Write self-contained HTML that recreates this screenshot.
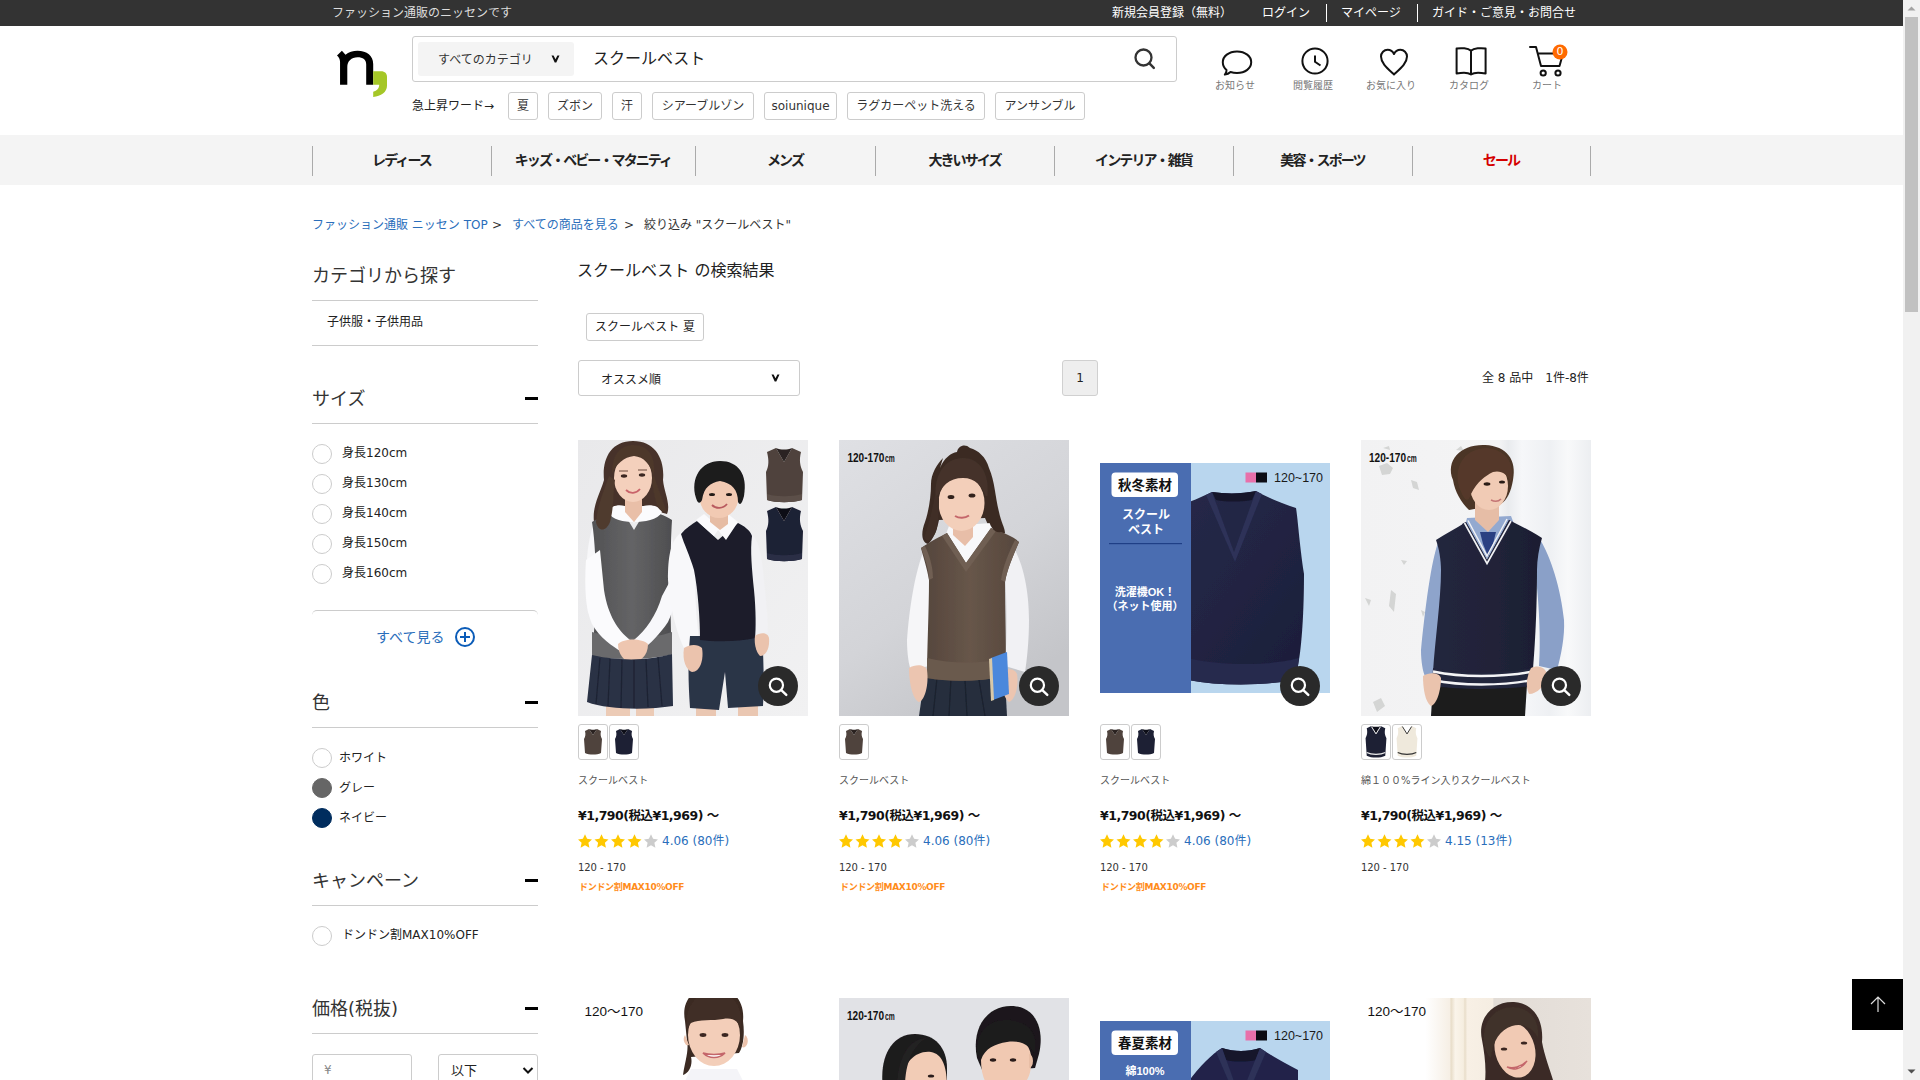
<!DOCTYPE html>
<html lang="ja">
<head>
<meta charset="utf-8">
<title>スクールベスト の検索結果 | ニッセン</title>
<style>
*{box-sizing:border-box;margin:0;padding:0}
html,body{width:1920px;height:1080px;overflow:hidden;background:#fff}
body{font-family:"DejaVu Sans","Liberation Sans","Noto Sans CJK JP",sans-serif;color:#333;position:relative;font-size:12px}
a{color:inherit;text-decoration:none}
.abs{position:absolute}
.t{position:absolute;white-space:nowrap;line-height:1}
#page{position:absolute;left:0;top:0;width:1903px;height:1080px;overflow:hidden;background:#fff}
/* top bar */
#topbar{position:absolute;left:0;top:0;width:1903px;height:26px;background:#333}
#topbar .t{font-size:12px;color:#fff;top:7px}
#topbar .sep{position:absolute;top:4px;width:1px;height:18px;background:#fff}
/* header */
#search{position:absolute;left:412px;top:36px;width:765px;height:46px;border:1px solid #ccc;border-radius:3px;background:#fff}
#catsel{position:absolute;left:418px;top:42px;width:156px;height:34px;background:#f4f4f4;border-radius:3px}
.tag{position:absolute;top:92px;height:28px;border:1px solid #ccc;border-radius:3px;font-size:12px;line-height:27px;text-align:center;white-space:nowrap;color:#333;background:#fff}
.hicon{position:absolute;top:44px;width:60px;height:50px}
.hlabel{position:absolute;top:81px;width:78px;text-align:center;font-size:10px;line-height:1;color:#777;white-space:nowrap}
/* nav */
#nav{position:absolute;left:0;top:135px;width:1903px;height:50px;background:#f4f4f4}
#nav .sep{position:absolute;top:11px;width:1px;height:30px;background:#aaa}
#nav .t{font-size:14px;font-weight:bold;color:#222;top:18px;text-align:center;letter-spacing:-1.9px}
/* breadcrumb */
.bc{font-size:12px;top:218.500px;color:#2a6ebb}
/* sidebar */
.sh{font-size:18px;color:#333}
.hr{position:absolute;left:312px;width:226px;height:1px;background:#ccc}
.minus{position:absolute;left:525px;width:13px;height:3px;background:#000}
.radio{position:absolute;left:312px;width:20px;height:20px;border-radius:50%;border:1px solid #ccc;background:#fff}
.sl{font-size:12px;color:#222}
/* main */
.card{position:absolute;width:230px}
.pimg{position:absolute;left:0;top:0;width:230px;height:276px;overflow:hidden}
.zoom{position:absolute;left:180px;top:226px;width:40px;height:40px;border-radius:50%;background:#2a2a2a}
.sw{position:absolute;top:284px;width:30px;height:36px;border:1px solid #ccc;border-radius:3px;background:#fff;overflow:hidden}
.pname{font-size:10px;color:#555;top:336.300px;left:0}
.price{font-size:12.5px;font-weight:bold;color:#111;top:369.500px;left:0;letter-spacing:-0.5px}
.stars{position:absolute;left:0;top:833px}
.rate{font-size:12px;color:#2a6ebb;top:395px;left:84px}
.size{font-size:10px;color:#333;top:422.500px;left:0;letter-spacing:-0.05px}
.camp{font-size:9px;font-weight:bold;color:#ff8c1a;top:443px;left:1px;letter-spacing:-0.3px}
</style>
</head>
<body>
<div id="page">

<!-- ===== top bar ===== -->
<div id="topbar">
  <span class="t" style="left:332px;color:#ddd">ファッション通販のニッセンです</span>
  <a class="t" style="left:1112px">新規会員登録（無料）</a>
  <a class="t" style="left:1262px">ログイン</a>
  <span class="sep" style="left:1326px"></span>
  <a class="t" style="left:1341px">マイページ</a>
  <span class="sep" style="left:1417px"></span>
  <a class="t" style="left:1432px">ガイド・ご意見・お問合せ</a>
</div>

<!-- ===== header ===== -->
<svg class="abs" style="left:325px;top:40px" width="80" height="65" viewBox="0 0 80 65">
  <path d="M12 15.400 L16.900 10.800 L20.500 14.800 C23.500 12 28 10.800 32.500 10.800 C42 10.800 48.200 16 48.200 24 L48.200 44.850 L41.200 44.850 L41.200 24.500 C41.200 19.500 38 17.200 32.500 17.200 C26.500 17.200 22.300 21 22.300 27 L22.300 44.850 L15.050 44.850 L15.050 22 C15.050 19 13.800 17 12 15.400 Z" fill="#000"/>
  <path d="M48.200 31.200 L56 31.200 C60 31.200 62 33.500 62 37 L62 45.750 C62 52 56 56.500 48.200 56.900 L48.200 51.800 C52 51 54.200 48.500 54.200 44.850 L48.200 44.850 Z" fill="#a5c727"/>
</svg>
<div id="search"></div>
<div id="catsel"></div>
<span class="t" style="left:438px;top:53.5px;font-size:12px;color:#333">すべてのカテゴリ</span>
<svg class="abs" style="left:551px;top:55px" width="9" height="8" viewBox="0 0 9 8"><path d="M0.5 0.5 L2.6 0.5 L4.5 4.2 L6.4 0.5 L8.5 0.5 L5.3 7.5 L3.7 7.5 Z" fill="#111"/></svg>
<span class="t" style="left:593px;top:51px;font-size:16px;color:#222">スクールベスト</span>
<svg class="abs" style="left:1131.500px;top:46.400px" width="26" height="26" viewBox="0 0 26 26"><circle cx="11.500" cy="11.500" r="8" fill="none" stroke="#333" stroke-width="2.300"/><path d="M17.400 17.400 L21.800 21.800" stroke="#333" stroke-width="2.500" stroke-linecap="round"/></svg>

<span class="t" style="left:412px;top:100px;font-size:12px;color:#222">急上昇ワード→</span>
<a class="tag" style="left:508px;width:30px">夏</a>
<a class="tag" style="left:548px;width:54px">ズボン</a>
<a class="tag" style="left:612px;width:30px">汗</a>
<a class="tag" style="left:652px;width:102px">シアーブルゾン</a>
<a class="tag" style="left:764px;width:73px">soiunique</a>
<a class="tag" style="left:847px;width:138px">ラグカーペット洗える</a>
<a class="tag" style="left:995px;width:90px">アンサンブル</a>

<!-- header icons -->
<svg class="abs" style="left:1219px;top:46px" width="36" height="32" viewBox="0 0 36 32"><path d="M18 5.500 C26.300 5.500 32.200 10.300 32.200 16.300 C32.200 22.300 26.300 27 18 27 C15.600 27 13.400 26.600 11.500 26 C10 27.400 8 28.300 5.800 28.600 C7 27.300 7.600 25.700 7.500 24 C5.200 22 3.800 19.300 3.800 16.300 C3.800 10.300 9.700 5.500 18 5.500 Z" fill="none" stroke="#111" stroke-width="2" stroke-linejoin="round"/></svg>
<svg class="abs" style="left:1299px;top:45px" width="32" height="32" viewBox="0 0 32 32"><circle cx="16" cy="16" r="12.6" fill="none" stroke="#111" stroke-width="2"/><path d="M16 10.500 L16 16.800 L21.500 20.500" fill="none" stroke="#111" stroke-width="2"/></svg>
<svg class="abs" style="left:1377px;top:46px" width="34" height="32" viewBox="0 0 34 32"><path d="M17 28.5 C10 22 4 17 4 10.6 C4 6.6 7 3.8 10.6 3.8 C13.4 3.8 15.8 5.4 17 8 C18.2 5.4 20.6 3.8 23.4 3.8 C27 3.8 30 6.6 30 10.6 C30 17 24 22 17 28.5 Z" fill="none" stroke="#111" stroke-width="2" stroke-linejoin="round"/></svg>
<svg class="abs" style="left:1453px;top:45px" width="36" height="32" viewBox="0 0 36 32"><path d="M18 5.800 C15 3.200 8 2.600 3.600 3.600 L3.600 28.600 C8 27.600 15 27.400 18 29.400 C21 27.400 28 27.600 32.600 28.600 L32.600 3.600 C28 2.600 21 3.200 18 5.800 Z M18 5.800 V29.400" fill="none" stroke="#111" stroke-width="2" stroke-linejoin="round"/></svg>
<svg class="abs" style="left:1527px;top:43px" width="42" height="36" viewBox="0 0 42 36"><path d="M3 4 L9 4 L14 23 L32.500 23 L36 10.500 L11 10.500" fill="none" stroke="#111" stroke-width="2" stroke-linejoin="round" stroke-linecap="round"/><circle cx="16.200" cy="30" r="2.600" fill="none" stroke="#111" stroke-width="2"/><circle cx="31" cy="30" r="2.600" fill="none" stroke="#111" stroke-width="2"/><circle cx="33" cy="9" r="7.5" fill="#ff6a00"/></svg>
<span class="t" style="left:1556px;top:46px;font-size:11px;color:#fff;width:8px;text-align:center">0</span>
<span class="hlabel" style="left:1196px">お知らせ</span>
<span class="hlabel" style="left:1274px">閲覧履歴</span>
<span class="hlabel" style="left:1352px">お気に入り</span>
<span class="hlabel" style="left:1430px">カタログ</span>
<span class="hlabel" style="left:1508px">カート</span>

<!-- ===== nav ===== -->
<div id="nav">
  <span class="sep" style="left:312px"></span><span class="sep" style="left:491px"></span><span class="sep" style="left:695px"></span><span class="sep" style="left:875px"></span><span class="sep" style="left:1054px"></span><span class="sep" style="left:1233px"></span><span class="sep" style="left:1412px"></span><span class="sep" style="left:1590px"></span>
  <a class="t" style="left:312px;width:179px">レディース</a>
  <a class="t" style="left:491px;width:204px">キッズ・ベビー・マタニティ</a>
  <a class="t" style="left:695px;width:180px">メンズ</a>
  <a class="t" style="left:875px;width:179px">大きいサイズ</a>
  <a class="t" style="left:1054px;width:179px">インテリア・雑貨</a>
  <a class="t" style="left:1233px;width:179px">美容・スポーツ</a>
  <a class="t" style="left:1412px;width:178px;color:#d40000">セール</a>
</div>

<!-- ===== breadcrumb ===== -->
<a class="t bc" style="left:312px">ファッション通販 ニッセン TOP</a>
<span class="t bc" style="left:492px;color:#333">&gt;</span>
<a class="t bc" style="left:512px">すべての商品を見る</a>
<span class="t bc" style="left:624px;color:#333">&gt;</span>
<span class="t bc" style="left:644px;color:#333">絞り込み "スクールベスト"</span>

<!-- ===== sidebar ===== -->
<span class="t sh" style="left:312px;top:267px">カテゴリから探す</span>
<div class="hr" style="top:300px"></div>
<span class="t sl" style="left:327px;top:316px">子供服・子供用品</span>
<div class="hr" style="top:345px"></div>

<span class="t sh" style="left:312px;top:390px">サイズ</span>
<div class="minus" style="top:397px"></div>
<div class="hr" style="top:423px"></div>
<div class="radio" style="top:444px"></div><span class="t sl" style="left:342px;top:447px">身長120cm</span>
<div class="radio" style="top:474px"></div><span class="t sl" style="left:342px;top:477px">身長130cm</span>
<div class="radio" style="top:504px"></div><span class="t sl" style="left:342px;top:507px">身長140cm</span>
<div class="radio" style="top:534px"></div><span class="t sl" style="left:342px;top:537px">身長150cm</span>
<div class="radio" style="top:564px"></div><span class="t sl" style="left:342px;top:567px">身長160cm</span>
<div class="abs" style="left:312px;top:610px;width:226px;height:10px;border-top:1px solid #ccc;border-radius:5px 5px 0 0"></div>
<a class="t" style="left:376px;top:630px;font-size:14px;color:#2a6ebb">すべて見る</a>
<svg class="abs" style="left:454px;top:626px" width="22" height="22" viewBox="0 0 22 22"><circle cx="11" cy="11" r="9" fill="none" stroke="#0b5cb8" stroke-width="2"/><path d="M6 11 H16 M11 6 V16" stroke="#0b5cb8" stroke-width="2"/></svg>

<span class="t sh" style="left:312px;top:694px">色</span>
<div class="minus" style="top:701px"></div>
<div class="hr" style="top:727px"></div>
<div class="radio" style="top:748px"></div><span class="t sl" style="left:339px;top:752px">ホワイト</span>
<div class="radio" style="top:778px;background:#666;border-color:#666"></div><span class="t sl" style="left:339px;top:782px">グレー</span>
<div class="radio" style="top:808px;background:#002d5e;border-color:#002d5e"></div><span class="t sl" style="left:339px;top:812px">ネイビー</span>

<span class="t sh" style="left:312px;top:872px">キャンペーン</span>
<div class="minus" style="top:879px"></div>
<div class="hr" style="top:905px"></div>
<div class="radio" style="top:926px"></div><span class="t sl" style="left:342px;top:929px">ドンドン割MAX10%OFF</span>

<span class="t sh" style="left:312px;top:1000px">価格(税抜)</span>
<div class="minus" style="top:1007px"></div>
<div class="hr" style="top:1033px"></div>
<div class="abs" style="left:312px;top:1054px;width:100px;height:40px;border:1px solid #ccc;border-radius:3px"></div>
<span class="t" style="left:324px;top:1064px;font-size:12px;color:#888">¥</span>
<div class="abs" style="left:438px;top:1054px;width:100px;height:40px;border:1px solid #ccc;border-radius:3px"></div>
<span class="t" style="left:451px;top:1064px;font-size:13px;color:#222">以下</span>
<svg class="abs" style="left:522px;top:1066px" width="12" height="10" viewBox="0 0 12 10"><path d="M1.5 2 L6 6.5 L10.5 2" fill="none" stroke="#111" stroke-width="2"/></svg>

<!-- ===== main ===== -->
<span class="t" style="left:577px;top:263px;font-size:16px;color:#222">スクールベスト の検索結果</span>
<a class="abs" style="left:586px;top:313px;width:118px;height:28px;border:1px solid #ccc;border-radius:3px;font-size:12px;line-height:27px;text-align:center;color:#222;white-space:nowrap">スクールベスト 夏</a>
<div class="abs" style="left:578px;top:360px;width:222px;height:36px;border:1px solid #ccc;border-radius:3px"></div>
<span class="t" style="left:601px;top:373.500px;font-size:12px;color:#222">オススメ順</span>
<svg class="abs" style="left:771px;top:374px" width="9" height="8" viewBox="0 0 9 8"><path d="M0.5 0.5 L2.6 0.5 L4.5 4.2 L6.4 0.5 L8.5 0.5 L5.3 7.5 L3.7 7.5 Z" fill="#111"/></svg>
<div class="abs" style="left:1062px;top:360px;width:36px;height:36px;border:1px solid #d0d0d0;border-radius:3px;background:#eee;font-size:12px;line-height:34px;text-align:center;color:#222">1</div>
<span class="t" style="left:1482px;top:372px;font-size:12px;color:#222">全 8 品中　1件-8件</span>


<!-- card 1 -->
<div class="card" style="left:578px;top:440px">
 <div class="pimg">
 <svg width="230" height="276" viewBox="0 0 230 276">
  <defs>
   <linearGradient id="bg1" x1="0" y1="0" x2="1" y2="1"><stop offset="0" stop-color="#e9e9eb"/><stop offset="1" stop-color="#f1f1f2"/></linearGradient>
   <filter id="soft" x="-5%" y="-5%" width="110%" height="110%"><feGaussianBlur stdDeviation="0.7"/></filter>
   <linearGradient id="gv" x1="0" y1="0" x2="1" y2="0"><stop offset="0" stop-color="#525254"/><stop offset="0.5" stop-color="#646466"/><stop offset="1" stop-color="#4e4e50"/></linearGradient>
  </defs>
  <rect width="230" height="276" fill="url(#bg1)"/>
  <g filter="url(#soft)">
   <!-- girl hair back -->
   <path d="M55 1 C32 1 24 20 26 40 C22 54 14 66 16 82 C17 94 26 98 32 90 C38 80 44 72 50 66 L66 66 C74 70 82 72 89 74 C93 64 86 52 85 40 C87 20 78 1 55 1 Z" fill="#47332a"/>
   <!-- girl legs -->
   <path d="M28 262 H52 V276 H28 Z M58 262 H76 V276 H58 Z" fill="#eccbb6"/>
   <!-- girl sleeves -->
   <path d="M16 84 C8 100 6 150 10 172 C16 190 30 204 42 212 L52 198 C42 186 34 172 30 150 L28 100 Z" fill="#f7f7f9"/>
   <path d="M90 84 C98 100 100 140 96 168 C88 188 76 200 64 210 L56 198 C68 186 78 172 82 150 Z" fill="#f4f4f7"/>
   <!-- girl vest -->
   <path d="M14 82 C24 76 36 72 44 70 L56 90 L68 70 C78 72 88 76 94 80 C92 110 92 180 94 214 C70 220 36 220 14 216 C18 180 20 120 14 82 Z" fill="url(#gv)"/>
   <path d="M14 192 C40 200 70 200 94 192 L94 214 C70 220 36 220 14 216 Z" fill="#6a6a6c"/>
   <!-- girl sleeves front -->
   <path d="M8 120 C6 150 8 170 14 184 C22 198 34 206 44 212 L52 200 C40 190 30 176 26 150 L22 110 Z" fill="#fbfbfd"/>
   <path d="M98 130 C100 150 96 170 90 182 C82 194 72 204 64 210 L56 200 C68 190 78 176 84 156 Z" fill="#f8f8fb"/>
   <!-- collar -->
   <path d="M30 72 C34 64 44 64 52 68 L56 84 L60 68 C68 64 80 64 84 72 C80 80 66 82 56 82 C46 82 34 80 30 72 Z" fill="#fbfbfd"/>
   <!-- neck & face -->
   <path d="M47 56 H64 V72 L56 82 L47 72 Z" fill="#e9bfa8"/>
   <ellipse cx="55" cy="38" rx="19" ry="24" fill="#f4d0bc"/>
   <!-- bangs -->
   <path d="M34 34 C34 12 44 5 56 5 C70 5 78 16 76 36 C72 24 66 17 56 16 C46 17 38 24 34 34 Z" fill="#4d372c"/>
   <path d="M31 36 C26 50 20 64 18 82 C20 92 28 92 32 82 C36 68 35 52 37 40 Z" fill="#503a2e"/>
   <path d="M76 36 C80 48 84 58 88 70 C85 74 80 70 78 62 C76 54 74 46 74 38 Z" fill="#4d372c"/>
   <!-- face details -->
   <ellipse cx="46" cy="36" rx="3.200" ry="1.700" fill="#3a2820"/><ellipse cx="64" cy="35" rx="3.200" ry="1.700" fill="#3a2820"/><path d="M41 31 h9 M60 30 h9" stroke="#6a4a3a" stroke-width="1"/>
   <path d="M48 50 C52 54 58 54 62 49" stroke="#c9636a" stroke-width="1.8" fill="none"/>
   <!-- hands girl -->
   <path d="M40 204 C46 198 64 198 70 204 C70 216 62 222 54 222 C46 222 40 214 40 204 Z" fill="#eec6b0"/>
   <!-- skirt -->
   <path d="M14 215 C40 221 70 221 94 214 L95 266 C70 270 30 270 9 262 Z" fill="#2a3144"/>
   <path d="M22 218 L18 264 M32 219 L30 266 M44 220 L43 268 M56 220 L56 268 M68 219 L70 267 M80 217 L84 266" stroke="#1d2333" stroke-width="1.2"/>
   <!-- boy legs -->
   <path d="M118 262 H138 V276 H118 Z M160 262 H180 V276 H160 Z" fill="#eac7b2"/>
   <!-- boy shirt sleeves -->
   <path d="M104 92 C92 100 90 118 90 140 C92 170 100 196 106 208 L122 204 C118 180 116 150 118 110 Z" fill="#f8f8fa"/>
   <path d="M172 92 C182 100 184 120 186 140 C188 160 190 180 190 192 L176 196 C174 170 172 140 170 110 Z" fill="#f1f1f4"/>
   <!-- boy shorts -->
   <path d="M112 196 H184 C186 220 186 250 185 266 L150 268 L147 232 L141 270 L112 268 C110 240 110 220 112 196 Z" fill="#2c3447"/>
   <!-- boy vest -->
   <path d="M103 94 C108 88 114 84 119 81 L140 100 L160 83 C166 86 172 90 174 96 C172 110 174 130 176 150 C178 170 178 190 177 198 C160 202 138 202 122 200 C122 180 120 150 116 130 C112 116 106 104 103 94 Z" fill="#1a1c29"/>
   <!-- boy collar -->
   <path d="M118 80 L126 74 L140 86 L150 74 L160 82 L148 100 L140 90 L136 96 Z" fill="#fafafc"/>
   <!-- boy neck/face -->
   <path d="M132 72 H150 V84 L142 90 L132 82 Z" fill="#e6bca4"/>
   <ellipse cx="141" cy="57" rx="19.500" ry="21" fill="#f2cab3"/>
   <path d="M118 58 C112 38 123 21 142 21 C160 21 170 34 166 56 C164 64 162 66 160 62 C160 50 154 43 142 41 C132 43 126 47 124 60 C122 64 120 64 118 58 Z" fill="#1b1a1c"/>
   <ellipse cx="134" cy="54.500" rx="3" ry="1.500" fill="#241a18"/><ellipse cx="151" cy="54.500" rx="3" ry="1.500" fill="#241a18"/>
   <path d="M134 65 C138 69 145 69 149 64" stroke="#b85a5e" stroke-width="1.800" fill="none"/>
   <!-- boy hands -->
   <path d="M106 208 C112 204 120 204 124 208 C126 220 122 232 114 232 C108 230 104 220 106 208 Z" fill="#ebc3ad"/>
   <path d="M177 196 C182 192 190 192 191 198 C192 208 188 216 182 216 C178 212 176 204 177 196 Z" fill="#ebc3ad"/>
   <!-- small vests -->
   <path d="M189 12 L198 8 L206 22 L214 8 L223 12 C221 20 222 26 225 32 L224 60 C214 63 198 63 189 60 L188 32 C191 26 191 20 189 12 Z" fill="#4f433d"/>
   <path d="M198 8 L206 22 L214 8 C209 10 203 10 198 8 Z" fill="#2a2220"/><path d="M189 54 C198 57 214 57 224 54 L224 60 C214 63 198 63 189 60 Z" fill="#5c4f48"/>
   <path d="M189 71 L198 67 L206 81 L214 67 L223 71 C221 79 222 85 225 91 L224 119 C214 122 198 122 189 119 L188 91 C191 85 191 79 189 71 Z" fill="#1d2034"/>
   <path d="M198 67 L206 81 L214 67 C209 69 203 69 198 67 Z" fill="#0d0e18"/><path d="M189 113 C198 116 214 116 224 113 L224 119 C214 122 198 122 189 119 Z" fill="#2a2e45"/>
  </g>
 </svg>
 </div>
 <div class="zoom"><svg width="40" height="40" viewBox="0 0 40 40"><circle cx="18.400" cy="19.200" r="6.600" fill="none" stroke="#fff" stroke-width="2.200"/><path d="M23.300 24.100 L28.300 28.900" stroke="#fff" stroke-width="2.400" stroke-linecap="round"/></svg></div>
 <div class="sw" style="left:0"><svg width="28" height="34" viewBox="0 0 28 34"><path d="M6 6 L10 4 L14 10 L18 4 L22 6 C21 10 22 12 23 14 L22 28 C18 30 10 30 6 28 L5 14 C6 12 7 10 6 6 Z" fill="#4f433d"/><path d="M10 4 L14 10 L18 4 C16 5 12 5 10 4 Z" fill="#2a2220"/></svg></div>
 <div class="sw" style="left:31px"><svg width="28" height="34" viewBox="0 0 28 34"><path d="M6 6 L10 4 L14 10 L18 4 L22 6 C21 10 22 12 23 14 L22 28 C18 30 10 30 6 28 L5 14 C6 12 7 10 6 6 Z" fill="#1d2034"/><path d="M10 4 L14 10 L18 4 C16 5 12 5 10 4 Z" fill="#0d0e18"/></svg></div>
 <span class="t pname">スクールベスト</span>
 <span class="t price">¥1,790(税込¥1,969) ～</span>
 <svg class="abs" style="left:0;top:393.800px" width="82" height="16" viewBox="0 0 82 16"><path transform="translate(0 0)" d="M7 0.300 L9.100 4.800 L14 5.400 L10.400 8.800 L11.400 13.700 L7 11.300 L2.600 13.700 L3.600 8.800 L0 5.400 L4.900 4.800 Z" fill="#ffc800" stroke-linejoin="round"/><path transform="translate(16.5 0)" d="M7 0.300 L9.100 4.800 L14 5.400 L10.400 8.800 L11.400 13.700 L7 11.300 L2.600 13.700 L3.600 8.800 L0 5.400 L4.900 4.800 Z" fill="#ffc800" stroke-linejoin="round"/><path transform="translate(33 0)" d="M7 0.300 L9.100 4.800 L14 5.400 L10.400 8.800 L11.400 13.700 L7 11.300 L2.600 13.700 L3.600 8.800 L0 5.400 L4.900 4.800 Z" fill="#ffc800" stroke-linejoin="round"/><path transform="translate(49.5 0)" d="M7 0.300 L9.100 4.800 L14 5.400 L10.400 8.800 L11.400 13.700 L7 11.300 L2.600 13.700 L3.600 8.800 L0 5.400 L4.900 4.800 Z" fill="#ffc800" stroke-linejoin="round"/><path transform="translate(66 0)" d="M7 0.300 L9.100 4.800 L14 5.400 L10.400 8.800 L11.400 13.700 L7 11.300 L2.600 13.700 L3.600 8.800 L0 5.400 L4.900 4.800 Z" fill="#ccc" stroke-linejoin="round"/></svg>
 <span class="t rate">4.06 (80件)</span>
 <span class="t size">120 - 170</span>
 <span class="t camp">ドンドン割MAX10%OFF</span>
</div>


<!-- card 2 -->
<div class="card" style="left:839px;top:440px">
 <div class="pimg">
 <svg width="230" height="276" viewBox="0 0 230 276">
  <defs>
   <linearGradient id="bg2" x1="0" y1="0" x2="0.6" y2="1"><stop offset="0" stop-color="#dfe0e4"/><stop offset="0.6" stop-color="#d3d4d8"/><stop offset="1" stop-color="#c4c5c9"/></linearGradient>
   <linearGradient id="bv" x1="0" y1="0" x2="1" y2="0"><stop offset="0" stop-color="#54453c"/><stop offset="0.5" stop-color="#675649"/><stop offset="1" stop-color="#56473d"/></linearGradient>
  </defs>
  <rect width="230" height="276" fill="url(#bg2)"/>
  <g filter="url(#soft)">
   <!-- hair back -->
   <path d="M101 28 C105 18 112 13 118 12 C119 6 126 3 131 8 C139 10 147 17 150 28 C156 42 156 56 160 72 C162 82 166 88 166 93 C160 97 154 93 150 87 L146 78 L100 80 C98 90 94 100 89 104 C82 102 82 92 86 82 C90 70 92 56 92 44 C92 34 98 24 104 18 Z" fill="#3b2b24"/>
   <!-- sleeves -->
   <path d="M86 108 C76 130 70 170 68 200 C68 214 70 226 72 230 L90 226 C90 200 92 160 94 130 Z" fill="#f6f6f8"/>
   <path d="M172 104 C184 120 190 150 190 180 C190 200 188 220 186 232 L166 226 C168 200 168 160 166 136 Z" fill="#f1f1f4"/>
   <!-- skirt -->
   <path d="M86 234 L166 238 L168 276 L80 276 Z" fill="#262f3e"/>
   <path d="M98 238 L94 276 M112 238 L110 276 M126 240 L128 276 M140 240 L146 276" stroke="#1a212d" stroke-width="1.3"/>
   <!-- shirt body/collar -->
   <path d="M110 86 L152 83 L160 102 L128 128 L104 102 Z" fill="#f8f8fa"/>
   <!-- vest -->
   <path d="M82 108 C92 101 102 96 108 93 L127 123 L152 88 C162 92 174 96 180 102 C174 116 168 130 166 142 C166 180 168 216 166 236 C140 242 110 242 88 238 C88 210 90 170 90 140 C88 128 84 116 82 108 Z" fill="url(#bv)"/>
   <path d="M108 93 L127 123 L152 88 L157 91 L127 132 L103 96 Z" fill="#6f5e52"/>
   <path d="M88 218 C112 224 144 224 166 218 L166 236 C140 242 110 242 88 238 Z" fill="#6b5a4e"/>
   <path d="M82 108 C86 118 90 130 90 140 L94 138 C94 126 90 114 86 106 Z M180 102 C174 116 168 130 166 142 L162 140 C164 126 170 112 176 100 Z" fill="#6f5e52"/>
   <!-- neck & face -->
   <path d="M114 84 H134 V97 L126 106 L114 95 Z" fill="#e8bea8"/>
   <ellipse cx="122.500" cy="63" rx="23" ry="28" fill="#f3cfba"/>
   <!-- bangs -->
   <path d="M97 60 C94 38 104 18 124 18 C142 18 152 36 148 60 C144 46 136 38 124 38 C110 38 102 46 97 60 Z" fill="#44322a"/>
   <path d="M96 54 C94 68 90 82 85 98 C88 104 96 98 98 88 C100 76 100 66 100 58 Z" fill="#3f2e26"/>
   <path d="M148 56 C150 68 156 80 164 91 C158 95 152 89 150 81 C148 71 146 63 146 56 Z" fill="#3b2b24"/>
   <ellipse cx="112" cy="57" rx="3.400" ry="2" fill="#33231d"/><ellipse cx="133" cy="55.500" rx="3.400" ry="2" fill="#33231d"/>
   <path d="M116 76 C120 78.500 126 78.500 130 75.500" stroke="#c4666a" stroke-width="2" fill="none"/>
   <!-- hands -->
   <path d="M70 228 C76 224 86 224 88 230 C90 244 86 260 80 262 C74 260 70 244 70 228 Z" fill="#ecc5b0"/>
   <path d="M162 232 C168 228 176 228 178 234 C180 246 176 260 170 262 C164 258 162 244 162 232 Z" fill="#ecc5b0"/>
   <!-- notebook -->
   <path d="M152 218 L168 212 L170 254 L154 260 Z" fill="#4c88dc"/>
   <path d="M150 219 L153 218 L155 260 L152 261 Z" fill="#d8c8a8"/>
  </g>
  <text x="8.400" y="22" font-family="'Liberation Sans',sans-serif" font-weight="bold" font-size="13.500" fill="#111" textLength="37" lengthAdjust="spacingAndGlyphs">120-170</text>
  <text x="46" y="22" font-family="'Liberation Sans',sans-serif" font-weight="bold" font-size="10.500" fill="#111" textLength="9.700" lengthAdjust="spacingAndGlyphs">cm</text>
 </svg>
 </div>
 <div class="zoom"><svg width="40" height="40" viewBox="0 0 40 40"><circle cx="18.400" cy="19.200" r="6.600" fill="none" stroke="#fff" stroke-width="2.200"/><path d="M23.300 24.100 L28.300 28.900" stroke="#fff" stroke-width="2.400" stroke-linecap="round"/></svg></div>
 <div class="sw" style="left:0"><svg width="28" height="34" viewBox="0 0 28 34"><path d="M6 6 L10 4 L14 10 L18 4 L22 6 C21 10 22 12 23 14 L22 28 C18 30 10 30 6 28 L5 14 C6 12 7 10 6 6 Z" fill="#4f433d"/><path d="M10 4 L14 10 L18 4 C16 5 12 5 10 4 Z" fill="#2a2220"/></svg></div>
 <span class="t pname">スクールベスト</span>
 <span class="t price">¥1,790(税込¥1,969) ～</span>
 <svg class="abs" style="left:0;top:393.800px" width="82" height="16" viewBox="0 0 82 16"><path transform="translate(0 0)" d="M7 0.300 L9.100 4.800 L14 5.400 L10.400 8.800 L11.400 13.700 L7 11.300 L2.600 13.700 L3.600 8.800 L0 5.400 L4.900 4.800 Z" fill="#ffc800" stroke-linejoin="round"/><path transform="translate(16.5 0)" d="M7 0.300 L9.100 4.800 L14 5.400 L10.400 8.800 L11.400 13.700 L7 11.300 L2.600 13.700 L3.600 8.800 L0 5.400 L4.900 4.800 Z" fill="#ffc800" stroke-linejoin="round"/><path transform="translate(33 0)" d="M7 0.300 L9.100 4.800 L14 5.400 L10.400 8.800 L11.400 13.700 L7 11.300 L2.600 13.700 L3.600 8.800 L0 5.400 L4.900 4.800 Z" fill="#ffc800" stroke-linejoin="round"/><path transform="translate(49.5 0)" d="M7 0.300 L9.100 4.800 L14 5.400 L10.400 8.800 L11.400 13.700 L7 11.300 L2.600 13.700 L3.600 8.800 L0 5.400 L4.900 4.800 Z" fill="#ffc800" stroke-linejoin="round"/><path transform="translate(66 0)" d="M7 0.300 L9.100 4.800 L14 5.400 L10.400 8.800 L11.400 13.700 L7 11.300 L2.600 13.700 L3.600 8.800 L0 5.400 L4.900 4.800 Z" fill="#ccc" stroke-linejoin="round"/></svg>
 <span class="t rate">4.06 (80件)</span>
 <span class="t size">120 - 170</span>
 <span class="t camp">ドンドン割MAX10%OFF</span>
</div>


<!-- card 3 -->
<div class="card" style="left:1100px;top:440px">
 <div class="pimg">
 <svg width="230" height="276" viewBox="0 0 230 276">
  <defs>
   <linearGradient id="nv" x1="0" y1="0" x2="1" y2="1"><stop offset="0" stop-color="#272a48"/><stop offset="0.5" stop-color="#212443"/><stop offset="1" stop-color="#1b1d38"/></linearGradient>
  </defs>
  <rect width="230" height="276" fill="#fff"/>
  <rect x="0" y="23" width="230" height="230" fill="#b9d6ee"/>
  <g filter="url(#soft)">
   <path d="M60 72 C80 66 100 58 112 52 C126 54 142 54 156 51 C168 58 184 64 196 68 C198 80 199 100 204 134 C204 170 202 206 198 226 L196 240 C160 246 120 246 88 240 L88 72 Z" fill="url(#nv)"/>
   <path d="M112 52 C126 54 142 54 156 51 L152 60 C140 62 126 62 116 60 Z" fill="#14162c"/>
   <path d="M112 52 L134 112 L156 51 L162 54 L135 122 L106 55 Z" fill="#2d3158"/>
   <path d="M88 218 C120 226 170 226 199 218 L196 240 C160 246 120 246 88 240 Z" fill="#262a4e"/>
  </g>
  <rect x="0" y="23" width="91" height="230" fill="#4a6db1"/>
  <rect x="11.500" y="32.500" width="66.500" height="24.500" rx="4" fill="#fff"/>
  <text x="45" y="50" text-anchor="middle" font-family="'Liberation Sans','Noto Sans CJK JP',sans-serif" font-weight="bold" font-size="13.500" fill="#111">秋冬素材</text>
  <text x="46" y="79" text-anchor="middle" font-family="'Liberation Sans','Noto Sans CJK JP',sans-serif" font-weight="bold" font-size="12" fill="#fff">スクール</text>
  <text x="46" y="94" text-anchor="middle" font-family="'Liberation Sans','Noto Sans CJK JP',sans-serif" font-weight="bold" font-size="12" fill="#fff">ベスト</text>
  <rect x="9" y="103" width="73" height="1.200" fill="#1f3f86"/>
  <text x="45" y="156" text-anchor="middle" font-family="'Liberation Sans','Noto Sans CJK JP',sans-serif" font-weight="bold" font-size="11" fill="#fff">洗濯機OK！</text>
  <text x="45" y="170" text-anchor="middle" font-family="'Liberation Sans','Noto Sans CJK JP',sans-serif" font-weight="bold" font-size="11" fill="#fff">（ネット使用）</text>
  <rect x="145.500" y="32.500" width="10.500" height="10" fill="#e870aa"/>
  <rect x="156" y="32.500" width="11" height="10" fill="#0c0c14"/>
  <text x="174" y="42.300" font-family="'Liberation Sans',sans-serif" font-size="12.500" fill="#1a1a1a" textLength="49" lengthAdjust="spacingAndGlyphs">120~170</text>
 </svg>
 </div>
 <div class="zoom"><svg width="40" height="40" viewBox="0 0 40 40"><circle cx="18.400" cy="19.200" r="6.600" fill="none" stroke="#fff" stroke-width="2.200"/><path d="M23.300 24.100 L28.300 28.900" stroke="#fff" stroke-width="2.400" stroke-linecap="round"/></svg></div>
 <div class="sw" style="left:0"><svg width="28" height="34" viewBox="0 0 28 34"><path d="M6 6 L10 4 L14 10 L18 4 L22 6 C21 10 22 12 23 14 L22 28 C18 30 10 30 6 28 L5 14 C6 12 7 10 6 6 Z" fill="#4f433d"/><path d="M10 4 L14 10 L18 4 C16 5 12 5 10 4 Z" fill="#2a2220"/></svg></div>
 <div class="sw" style="left:31px"><svg width="28" height="34" viewBox="0 0 28 34"><path d="M6 6 L10 4 L14 10 L18 4 L22 6 C21 10 22 12 23 14 L22 28 C18 30 10 30 6 28 L5 14 C6 12 7 10 6 6 Z" fill="#1d2034"/><path d="M10 4 L14 10 L18 4 C16 5 12 5 10 4 Z" fill="#0d0e18"/></svg></div>
 <span class="t pname">スクールベスト</span>
 <span class="t price">¥1,790(税込¥1,969) ～</span>
 <svg class="abs" style="left:0;top:393.800px" width="82" height="16" viewBox="0 0 82 16"><path transform="translate(0 0)" d="M7 0.300 L9.100 4.800 L14 5.400 L10.400 8.800 L11.400 13.700 L7 11.300 L2.600 13.700 L3.600 8.800 L0 5.400 L4.900 4.800 Z" fill="#ffc800" stroke-linejoin="round"/><path transform="translate(16.5 0)" d="M7 0.300 L9.100 4.800 L14 5.400 L10.400 8.800 L11.400 13.700 L7 11.300 L2.600 13.700 L3.600 8.800 L0 5.400 L4.900 4.800 Z" fill="#ffc800" stroke-linejoin="round"/><path transform="translate(33 0)" d="M7 0.300 L9.100 4.800 L14 5.400 L10.400 8.800 L11.400 13.700 L7 11.300 L2.600 13.700 L3.600 8.800 L0 5.400 L4.900 4.800 Z" fill="#ffc800" stroke-linejoin="round"/><path transform="translate(49.5 0)" d="M7 0.300 L9.100 4.800 L14 5.400 L10.400 8.800 L11.400 13.700 L7 11.300 L2.600 13.700 L3.600 8.800 L0 5.400 L4.900 4.800 Z" fill="#ffc800" stroke-linejoin="round"/><path transform="translate(66 0)" d="M7 0.300 L9.100 4.800 L14 5.400 L10.400 8.800 L11.400 13.700 L7 11.300 L2.600 13.700 L3.600 8.800 L0 5.400 L4.900 4.800 Z" fill="#ccc" stroke-linejoin="round"/></svg>
 <span class="t rate">4.06 (80件)</span>
 <span class="t size">120 - 170</span>
 <span class="t camp">ドンドン割MAX10%OFF</span>
</div>

<!-- card 4 -->
<div class="card" style="left:1361px;top:440px">
 <div class="pimg">
 <svg width="230" height="276" viewBox="0 0 230 276">
  <defs>
   <linearGradient id="bg4" x1="0" y1="0" x2="1" y2="0"><stop offset="0" stop-color="#f2f2f3"/><stop offset="0.6" stop-color="#f4f4f5"/><stop offset="0.64" stop-color="#e9ebee"/><stop offset="0.7" stop-color="#f6f7f9"/><stop offset="0.82" stop-color="#eef0f3"/><stop offset="0.9" stop-color="#f8f9fa"/><stop offset="1" stop-color="#eceef1"/></linearGradient>
   <linearGradient id="v4" x1="0" y1="0" x2="1" y2="0"><stop offset="0" stop-color="#24263d"/><stop offset="0.5" stop-color="#212339"/><stop offset="1" stop-color="#1c1e32"/></linearGradient>
  </defs>
  <rect width="230" height="276" fill="url(#bg4)"/>
  <g filter="url(#soft)">
   <g fill="#d4d5d4">
    <path d="M18 26 l8 -3 l6 5 l-3 6 l-8 1 Z M50 40 l6 2 l2 8 l-6 -2 Z M30 150 l5 4 l-2 18 l-5 -6 Z M4 158 l6 2 l-2 6 Z M40 120 l6 1 l-3 4 Z M12 262 l8 -4 l4 8 l-8 6 Z M60 170 l4 2 l-2 5 Z M22 8 l6 -2 l1 4 Z M95 10 l5 -4 l3 5 Z"/>
   </g>
   <!-- hair back -->
   <path d="M92 40 C84 20 100 4 124 5 C146 6 156 20 152 40 C150 52 146 60 140 64 L108 70 C100 62 94 52 92 40 Z" fill="#4b3425"/>
   <!-- sleeves -->
   <path d="M78 100 C70 120 64 170 60 210 C60 222 62 232 64 236 L80 234 C82 210 86 170 90 130 Z" fill="#8ea4cb"/>
   <path d="M178 98 C190 116 200 150 203 180 C204 196 200 216 196 230 L178 226 C180 200 178 160 174 130 Z" fill="#8aa0c8"/>
   <!-- pants -->
   <path d="M72 244 L166 244 L164 276 L70 276 Z" fill="#1a1a1d"/>
   <!-- shirt collar -->
   <path d="M106 78 L150 76 L156 92 L127 120 L102 94 Z" fill="#93a9d0"/>
   <path d="M119 92 L135 92 L132 104 L127 116 L122 104 Z" fill="#2a3f82"/>
   <!-- vest -->
   <path d="M75 100 C84 94 96 88 105 82 L126 120 L148 80 C160 86 172 92 181 98 C178 108 176 120 176 130 C176 170 174 206 172 230 C140 236 100 236 72 232 C74 200 80 160 80 130 C80 120 78 108 75 100 Z" fill="url(#v4)"/>
   <path d="M105 82 L126 120 L148 80 L152 82 L126 128 L101 84 Z" fill="#23253c"/>
   <path d="M103.500 83 L126 123.500 L150 81" fill="none" stroke="#f2f2f4" stroke-width="1.600"/>
   <path d="M107 80.500 L126 116 L146 79" fill="none" stroke="#f2f2f4" stroke-width="1.500"/>
   <!-- hem -->
   <path d="M72 228 C100 234 140 234 172 228 L171 246 C140 250 100 250 71 246 Z" fill="#23253c"/>
   <path d="M72 231.500 C100 237.500 140 237.500 172 231.500" fill="none" stroke="#f4f4f6" stroke-width="2.400"/>
   <path d="M71.500 240 C100 246 140 246 171.500 240" fill="none" stroke="#f4f4f6" stroke-width="2.400"/>
   <!-- neck & face -->
   <path d="M114 62 H138 V80 L127 92 L114 80 Z" fill="#e6bda6"/>
   <ellipse cx="128" cy="46" rx="19" ry="24" fill="#f1cbb5"/>
   <!-- hair front -->
   <path d="M100 52 C90 30 102 8 126 8 C146 10 154 24 150 42 C146 34 140 30 132 32 C124 36 116 42 110 54 C108 62 104 62 100 52 Z" fill="#54392a"/>
   <ellipse cx="126" cy="44" rx="3.400" ry="1.700" fill="#2a1c16"/><ellipse cx="141" cy="42" rx="3" ry="1.600" fill="#2a1c16"/>
   <path d="M130 60 C134 62 138 61 140 59" stroke="#c47474" stroke-width="1.600" fill="none"/>
   <!-- hands -->
   <path d="M62 236 C68 232 78 232 80 238 C80 250 76 264 70 266 C64 262 62 248 62 236 Z" fill="#eac3ad"/>
   <path d="M170 228 C178 224 186 228 186 236 C184 246 176 254 168 254 C164 246 166 236 170 228 Z" fill="#eac3ad"/>
  </g>
  <text x="8" y="22" font-family="'Liberation Sans',sans-serif" font-weight="bold" font-size="13.500" fill="#111" textLength="37" lengthAdjust="spacingAndGlyphs">120-170</text>
  <text x="46" y="22" font-family="'Liberation Sans',sans-serif" font-weight="bold" font-size="10.500" fill="#111" textLength="9.700" lengthAdjust="spacingAndGlyphs">cm</text>
 </svg>
 </div>
 <div class="zoom"><svg width="40" height="40" viewBox="0 0 40 40"><circle cx="18.400" cy="19.200" r="6.600" fill="none" stroke="#fff" stroke-width="2.200"/><path d="M23.300 24.100 L28.300 28.900" stroke="#fff" stroke-width="2.400" stroke-linecap="round"/></svg></div>
 <div class="sw" style="left:0"><svg width="28" height="34" viewBox="0 0 28 34"><g transform="translate(14 17) scale(1.16 1.24) translate(-14 -17)"><path d="M6 6 L10 4 L14 10 L18 4 L22 6 C21 10 22 12 23 14 L22 28 C18 30 10 30 6 28 L5 14 C6 12 7 10 6 6 Z" fill="#1d2034"/><path d="M10 4 L14 10 L18 4 C16 5 12 5 10 4 Z" fill="#0d0e18"/><path d="M6 25.500 C10 27.500 18 27.500 22 25.500" fill="none" stroke="#eee" stroke-width="1"/><path d="M10 4.500 L14 10.500 L18 4.500" fill="none" stroke="#eee" stroke-width="0.800"/></g></svg></div>
 <div class="sw" style="left:31px"><svg width="28" height="34" viewBox="0 0 28 34"><g transform="translate(14 17) scale(1.16 1.24) translate(-14 -17)"><path d="M6 6 L10 4 L14 10 L18 4 L22 6 C21 10 22 12 23 14 L22 28 C18 30 10 30 6 28 L5 14 C6 12 7 10 6 6 Z" fill="#efe9dc"/><path d="M6 25.500 C10 27.500 18 27.500 22 25.500" fill="none" stroke="#333" stroke-width="1"/><path d="M10 4.500 L14 10.500 L18 4.500" fill="none" stroke="#333" stroke-width="0.800"/></g></svg></div>
 <span class="t pname">綿１００%ライン入りスクールベスト</span>
 <span class="t price">¥1,790(税込¥1,969) ～</span>
 <svg class="abs" style="left:0;top:393.800px" width="82" height="16" viewBox="0 0 82 16"><path transform="translate(0 0)" d="M7 0.300 L9.100 4.800 L14 5.400 L10.400 8.800 L11.400 13.700 L7 11.300 L2.600 13.700 L3.600 8.800 L0 5.400 L4.900 4.800 Z" fill="#ffc800" stroke-linejoin="round"/><path transform="translate(16.5 0)" d="M7 0.300 L9.100 4.800 L14 5.400 L10.400 8.800 L11.400 13.700 L7 11.300 L2.600 13.700 L3.600 8.800 L0 5.400 L4.900 4.800 Z" fill="#ffc800" stroke-linejoin="round"/><path transform="translate(33 0)" d="M7 0.300 L9.100 4.800 L14 5.400 L10.400 8.800 L11.400 13.700 L7 11.300 L2.600 13.700 L3.600 8.800 L0 5.400 L4.900 4.800 Z" fill="#ffc800" stroke-linejoin="round"/><path transform="translate(49.5 0)" d="M7 0.300 L9.100 4.800 L14 5.400 L10.400 8.800 L11.400 13.700 L7 11.300 L2.600 13.700 L3.600 8.800 L0 5.400 L4.900 4.800 Z" fill="#ffc800" stroke-linejoin="round"/><path transform="translate(66 0)" d="M7 0.300 L9.100 4.800 L14 5.400 L10.400 8.800 L11.400 13.700 L7 11.300 L2.600 13.700 L3.600 8.800 L0 5.400 L4.900 4.800 Z" fill="#ccc" stroke-linejoin="round"/></svg>
 <span class="t rate">4.15 (13件)</span>
 <span class="t size">120 - 170</span>
</div>


<!-- row 2 (partially visible) -->
<div class="card" style="left:578px;top:998px">
 <div class="pimg">
 <svg width="230" height="276" viewBox="0 0 230 276">
  <rect width="230" height="276" fill="#fff"/>
  <g filter="url(#soft)" transform="translate(-5,-7)">
   <path d="M112 30 C108 10 120 -4 140 -4 C160 -4 172 10 170 30 C172 44 170 56 166 62 L118 66 C120 74 116 82 110 84 C112 70 116 60 114 50 Z" fill="#3a2a22"/>
   <path d="M112 44 a4 6 0 0 0 4 10 Z M172 44 a4 6 0 0 1 -3 12 Z" fill="#ecc3ac"/>
   <ellipse cx="141" cy="44" rx="26" ry="31" fill="#f3ceb9"/>
   <path d="M114 40 C110 18 122 0 141 0 C160 0 172 16 168 40 C166 30 160 26 150 28 C140 30 126 28 118 32 C116 34 115 38 114 40 Z" fill="#3f2d25"/>
   <ellipse cx="130" cy="44" rx="3.400" ry="1.900" fill="#3a2820"/><ellipse cx="152" cy="44" rx="3.400" ry="1.900" fill="#3a2820"/>
   <path d="M130 62 C136 68 146 68 152 62 C146 64 136 64 130 62 Z" fill="#fff" stroke="#c4666a" stroke-width="1.600"/>
   <path d="M118 78 L164 78 L170 90 L112 90 Z" fill="#f4f4f8"/>
  </g>
  <text x="6.500" y="18" font-family="'Liberation Sans','Noto Sans CJK JP',sans-serif" font-size="13.500" fill="#111">120～170</text>
 </svg>
 </div>
</div>
<div class="card" style="left:839px;top:998px">
 <div class="pimg">
 <svg width="230" height="276" viewBox="0 0 230 276">
  <rect width="230" height="276" fill="#e1e2e6"/>
  <g filter="url(#soft)">
   <!-- girl -->
   <path d="M44 90 C40 60 52 36 76 36 C96 36 108 50 108 70 L108 90 Z" fill="#1d1a1c"/>
   <path d="M62 90 C62 66 76 52 92 54 C104 56 108 70 108 90 Z" fill="#f2ccb6"/>
   <path d="M58 90 C58 60 70 40 88 40 C76 46 66 62 66 90 Z" fill="#232022"/>
   <!-- boy -->
   <path d="M138 60 C132 30 148 8 172 8 C196 8 206 30 200 56 L196 70 L144 74 Z" fill="#1a181a"/>
   <path d="M142 62 C142 44 156 38 170 40 C186 40 194 50 192 66 C192 78 186 90 176 90 L150 90 C144 82 142 72 142 62 Z" fill="#f1c9b2"/>
   <path d="M138 56 C136 34 150 20 172 22 C190 24 200 36 196 56 C190 46 180 42 168 44 C156 46 146 50 142 62 Z" fill="#1c1a1c"/>
   <path d="M190 56 a4 7 0 0 1 0 14 Z" fill="#e8bea6"/>
   <ellipse cx="154" cy="62" rx="3.200" ry="1.700" fill="#2a1e1a"/><ellipse cx="174" cy="62" rx="3.200" ry="1.700" fill="#2a1e1a"/>
   <ellipse cx="92" cy="78" rx="3.200" ry="1.600" fill="#2a1e1a"/>
  </g>
  <text x="8" y="22" font-family="'Liberation Sans',sans-serif" font-weight="bold" font-size="13.500" fill="#111" textLength="37" lengthAdjust="spacingAndGlyphs">120-170</text>
  <text x="46" y="22" font-family="'Liberation Sans',sans-serif" font-weight="bold" font-size="10.500" fill="#111" textLength="9.700" lengthAdjust="spacingAndGlyphs">cm</text>
 </svg>
 </div>
</div>
<div class="card" style="left:1100px;top:998px">
 <div class="pimg">
 <svg width="230" height="276" viewBox="0 0 230 276">
  <rect width="230" height="276" fill="#fff"/>
  <rect x="0" y="23" width="230" height="230" fill="#b9d6ee"/>
  <g filter="url(#soft)">
   <path d="M88 84 C100 68 112 56 122 50 C134 54 148 54 160 50 C172 58 186 66 198 72 L198 120 L88 120 Z" fill="#20244a"/>
   <path d="M122 50 C134 54 148 54 160 50 L156 62 C146 64 134 64 126 62 Z" fill="#12142a"/>
   <path d="M122 50 L140 100 L160 50 L166 54 L141 112 L116 54 Z" fill="#2d3158"/>
  </g>
  <rect x="0" y="23" width="91" height="230" fill="#4a6db1"/>
  <rect x="11.500" y="32.500" width="66.500" height="24.500" rx="4" fill="#fff"/>
  <text x="45" y="50" text-anchor="middle" font-family="'Liberation Sans','Noto Sans CJK JP',sans-serif" font-weight="bold" font-size="13.500" fill="#111">春夏素材</text>
  <text x="45" y="77" text-anchor="middle" font-family="'Liberation Sans','Noto Sans CJK JP',sans-serif" font-weight="bold" font-size="11" fill="#fff">綿100%</text>
  <rect x="145.500" y="32.500" width="10.500" height="10" fill="#e870aa"/>
  <rect x="156" y="32.500" width="11" height="10" fill="#0c0c14"/>
  <text x="174" y="42.300" font-family="'Liberation Sans',sans-serif" font-size="12.500" fill="#1a1a1a" textLength="49" lengthAdjust="spacingAndGlyphs">120~170</text>
 </svg>
 </div>
</div>
<div class="card" style="left:1361px;top:998px">
 <div class="pimg">
 <svg width="230" height="276" viewBox="0 0 230 276">
  <defs>
   <linearGradient id="bg8" x1="0" y1="0" x2="1" y2="0"><stop offset="0" stop-color="#fff"/><stop offset="0.28" stop-color="#fff"/><stop offset="0.385" stop-color="#f6efe5"/><stop offset="0.392" stop-color="#e8ddc9"/><stop offset="0.41" stop-color="#faf4ea"/><stop offset="0.445" stop-color="#f6eee0"/><stop offset="0.452" stop-color="#e8ddc9"/><stop offset="0.462" stop-color="#f8f0e5"/><stop offset="0.572" stop-color="#f5ede2"/><stop offset="0.578" stop-color="#e2dcd6"/><stop offset="1" stop-color="#e7e1db"/></linearGradient>
  </defs>
  <rect width="230" height="276" fill="url(#bg8)"/>
  <g filter="url(#soft)">
   <path d="M121 42 C116 20 132 3 153 4 C171 5 183 20 181 44 C184 60 190 74 195 92 L123 92 C126 74 124 58 121 42 Z" fill="#3a2c27"/>
   <ellipse cx="154" cy="52" rx="20" ry="28" transform="rotate(-14 154 52)" fill="#f1cab4"/>
   <path d="M123 46 C120 24 134 8 153 9 C169 10 179 22 177 40 C171 29 161 25 151 28 C139 32 132 42 130 60 C127 58 124 52 123 46 Z" fill="#403029"/>
   <ellipse cx="143" cy="51" rx="3.200" ry="1.600" fill="#3a2820"/><ellipse cx="163" cy="45" rx="3.200" ry="1.600" fill="#3a2820"/>
   <path d="M146 69 C152 73 161 71 166 63 C160 69 152 71 146 69 Z" fill="#fff" stroke="#c4666a" stroke-width="1.400"/>
  </g>
  <text x="6.500" y="18" font-family="'Liberation Sans','Noto Sans CJK JP',sans-serif" font-size="13.500" fill="#111">120～170</text>
 </svg>
 </div>
</div>


<!-- back to top -->
<div class="abs" style="left:1852px;top:979px;width:51px;height:51px;background:#000"></div>
<svg class="abs" style="left:1866px;top:994px" width="24" height="22" viewBox="0 0 24 22"><path d="M12 3 V18 M5 10 L12 3 L19 10" fill="none" stroke="#ddd" stroke-width="1.2"/></svg>

</div>

<!-- fake scrollbar -->
<div class="abs" style="left:1903px;top:0;width:17px;height:1080px;background:#f1f1f1"></div>
<div class="abs" style="left:1905px;top:17px;width:13px;height:295px;background:#c1c1c1"></div>
<svg class="abs" style="left:1903px;top:0" width="17" height="17" viewBox="0 0 17 17"><path d="M4.5 10.5 L8.5 6.5 L12.5 10.5 Z" fill="#a3a3a3"/></svg>
<svg class="abs" style="left:1903px;top:1063px" width="17" height="17" viewBox="0 0 17 17"><path d="M4.5 6.5 L8.5 10.5 L12.5 6.5 Z" fill="#505050"/></svg>
</body>
</html>
